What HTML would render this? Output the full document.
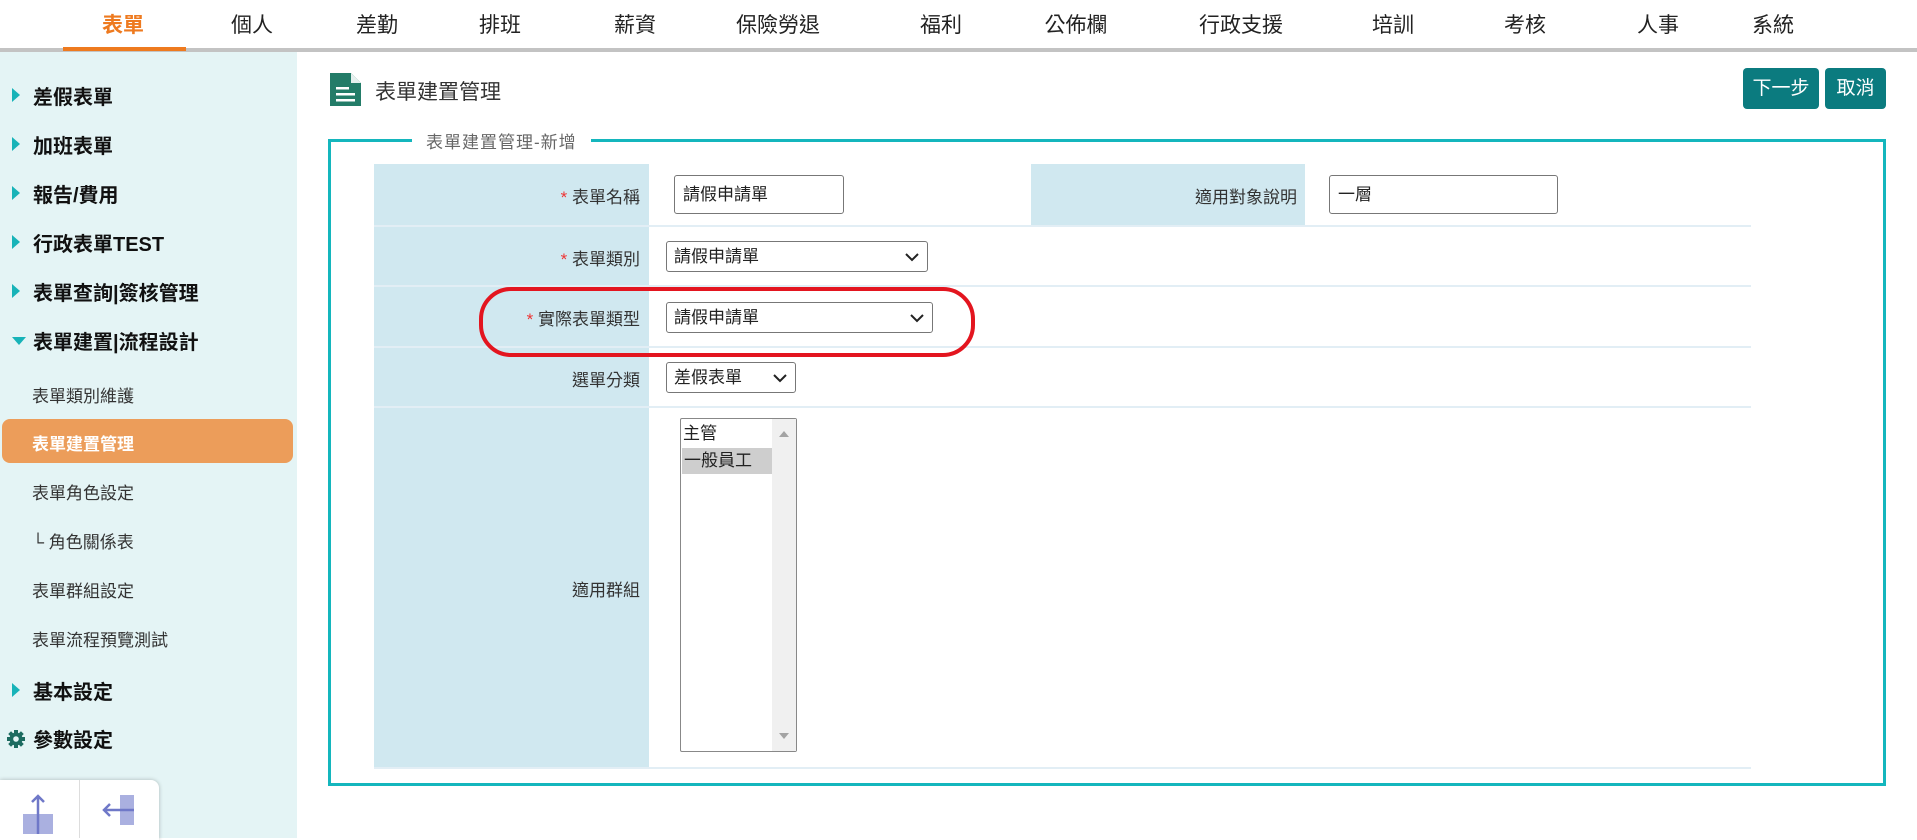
<!DOCTYPE html>
<html><head><meta charset="utf-8"><style>
*{margin:0;padding:0;box-sizing:border-box}
body{width:1917px;height:838px;position:relative;overflow:hidden;background:#fff;font-family:"Liberation Sans","Noto Sans CJK TC",sans-serif;color:#222}
.a{position:absolute;white-space:nowrap}
.nav{font-size:21px;color:#222;top:9px;transform:translateX(-50%)}
.side{font-size:20px;color:#111;left:33px;font-weight:bold}
.tri{position:absolute;left:12px;width:0;height:0;border-top:7px solid transparent;border-bottom:7px solid transparent;border-left:8px solid #17b3b8}
.sub{font-size:17px;color:#333;left:32px}
.lab{background:#d0e8f0;position:absolute}
.lt{font-size:17px;color:#333;position:absolute;text-align:right}
.sep{position:absolute;left:374px;width:1377px;height:2px;background:#e2eef5}
.inp{position:absolute;border:1px solid #777;border-radius:3px;background:#fff;font-size:17px;padding-left:8px;color:#222}
.sel{position:absolute;border:1px solid #777;border-radius:3px;background:#fff;font-size:17px;padding-left:7px;color:#222}
.sel svg{position:absolute;right:8px;top:50%;margin-top:-4px}
</style></head><body>
<div class="a nav" style="left:123px;color:#ee7a1f;font-weight:bold">表單</div>
<div class="a nav" style="left:252px">個人</div>
<div class="a nav" style="left:377px">差勤</div>
<div class="a nav" style="left:500px">排班</div>
<div class="a nav" style="left:635px">薪資</div>
<div class="a nav" style="left:778px">保險勞退</div>
<div class="a nav" style="left:941px">福利</div>
<div class="a nav" style="left:1076px">公佈欄</div>
<div class="a nav" style="left:1241px">行政支援</div>
<div class="a nav" style="left:1393px">培訓</div>
<div class="a nav" style="left:1525px">考核</div>
<div class="a nav" style="left:1658px">人事</div>
<div class="a nav" style="left:1773px">系統</div>
<div class="a" style="left:0;top:48px;width:1917px;height:4px;background:#c3c3c3"></div>
<div class="a" style="left:63px;top:47px;width:123px;height:4px;background:#ee7a1f"></div>
<div class="a" style="left:0;top:52px;width:297px;height:786px;background:#e4f4f5"></div>
<div class="tri" style="top:88px"></div><div class="a side" style="top:81px">差假表單</div>
<div class="tri" style="top:137px"></div><div class="a side" style="top:130px">加班表單</div>
<div class="tri" style="top:186px"></div><div class="a side" style="top:179px">報告/費用</div>
<div class="tri" style="top:235px"></div><div class="a side" style="top:228px">行政表單TEST</div>
<div class="tri" style="top:284px"></div><div class="a side" style="top:277px">表單查詢|簽核管理</div>
<div class="a" style="left:12px;top:337px;width:0;height:0;border-left:7px solid transparent;border-right:7px solid transparent;border-top:8px solid #17b3b8"></div>
<div class="a side" style="top:326px">表單建置|流程設計</div>
<div class="a sub" style="top:382px">表單類別維護</div>
<div class="a" style="left:2px;top:419px;width:291px;height:44px;background:#ec9d5a;border-radius:8px"></div>
<div class="a sub" style="top:430px;color:#fff;font-weight:bold">表單建置管理</div>
<div class="a sub" style="top:479px">表單角色設定</div>
<div class="a sub" style="top:528px">└ 角色關係表</div>
<div class="a sub" style="top:577px">表單群組設定</div>
<div class="a sub" style="top:626px">表單流程預覽測試</div>
<div class="tri" style="top:683px"></div><div class="a side" style="top:676px">基本設定</div>
<svg class="a" style="left:6px;top:729px" width="20" height="20" viewBox="0 0 20 20"><g fill="#1c6b60"><circle cx="10" cy="10" r="6.5"/><rect x="8" y="1" width="4" height="18"/><rect x="1" y="8" width="18" height="4"/><rect x="8" y="1" width="4" height="18" transform="rotate(45 10 10)"/><rect x="8" y="1" width="4" height="18" transform="rotate(-45 10 10)"/></g><circle cx="10" cy="10" r="2.8" fill="#e4f4f5"/></svg>
<div class="a side" style="top:724px;left:33px">參數設定</div>
<div class="a" style="left:0;top:780px;width:159px;height:60px;background:#fff;border-radius:0 8px 0 0;box-shadow:0 0 4px rgba(0,0,0,.25)"></div>
<div class="a" style="left:79px;top:780px;width:1px;height:58px;background:#ddd"></div>
<svg class="a" style="left:20px;top:792px" width="40" height="46"><rect x="3" y="22" width="30" height="20" fill="#aab0e0"/><path d="M18 42V4M12 10l6-6 6 6" stroke="#6f78c8" stroke-width="2.5" fill="none"/></svg>
<svg class="a" style="left:100px;top:792px" width="40" height="40"><rect x="20" y="3" width="14" height="30" fill="#aab0e0"/><path d="M34 18H4M10 12l-6 6 6 6" stroke="#6f78c8" stroke-width="2.5" fill="none"/></svg>
<svg class="a" style="left:330px;top:73px" width="32" height="33" viewBox="0 0 32 33"><path d="M0 0H21L31 10V33H0Z" fill="#237c68"/><path d="M21 0V10H31" fill="#e6f0ee"/><rect x="6" y="14" width="13" height="2.5" fill="#fff"/><rect x="6" y="20" width="19" height="2.5" fill="#fff"/><rect x="6" y="26" width="19" height="2.5" fill="#fff"/></svg>
<div class="a" style="left:375px;top:76px;font-size:21px;color:#333">表單建置管理</div>
<div class="a" style="left:1743px;top:68px;width:76px;height:41px;background:#0b7b7f;border-radius:4px;color:#fff;font-size:19px;text-align:center;line-height:41px">下一步</div>
<div class="a" style="left:1825px;top:68px;width:61px;height:41px;background:#0b7b7f;border-radius:4px;color:#fff;font-size:19px;text-align:center;line-height:41px">取消</div>
<div class="a" style="left:328px;top:139px;width:1558px;height:647px;border:3px solid #14b6bd"></div>
<div class="a" style="left:412px;top:128px;background:#fff;padding:0 14px;font-size:17px;color:#666;letter-spacing:1px">表單建置管理-新增</div>
<div class="lab" style="left:374px;top:164px;width:275px;height:61px"></div>
<div class="lab" style="left:1031px;top:164px;width:274px;height:61px"></div>
<div class="lab" style="left:374px;top:227px;width:275px;height:58px"></div>
<div class="lab" style="left:374px;top:287px;width:275px;height:59px"></div>
<div class="lab" style="left:374px;top:348px;width:275px;height:58px"></div>
<div class="lab" style="left:374px;top:408px;width:275px;height:359px"></div>
<div class="sep" style="top:225px"></div><div class="sep" style="top:285px"></div><div class="sep" style="top:346px"></div><div class="sep" style="top:406px"></div><div class="sep" style="top:767px"></div>
<div class="lt" style="right:1277px;top:183px"><span style="color:#e33">* </span>表單名稱</div>
<div class="lt" style="right:620px;top:183px">適用對象說明</div>
<div class="lt" style="right:1277px;top:245px"><span style="color:#e33">* </span>表單類別</div>
<div class="lt" style="right:1277px;top:305px"><span style="color:#e33">* </span>實際表單類型</div>
<div class="lt" style="right:1277px;top:366px">選單分類</div>
<div class="lt" style="right:1277px;top:576px">適用群組</div>
<div class="inp" style="left:674px;top:175px;width:170px;height:39px;line-height:37px">請假申請單</div>
<div class="inp" style="left:1329px;top:175px;width:229px;height:39px;line-height:37px">一層</div>
<div class="sel" style="left:666px;top:241px;width:262px;height:31px;line-height:29px">請假申請單<svg width="14" height="9"><path d="M1 1l6 6 6-6" stroke="#222" stroke-width="2" fill="none"/></svg></div>
<div class="sel" style="left:666px;top:302px;width:267px;height:31px;line-height:29px">請假申請單<svg width="14" height="9"><path d="M1 1l6 6 6-6" stroke="#222" stroke-width="2" fill="none"/></svg></div>
<div class="sel" style="left:666px;top:362px;width:130px;height:31px;line-height:29px">差假表單<svg width="14" height="9"><path d="M1 1l6 6 6-6" stroke="#222" stroke-width="2" fill="none"/></svg></div>
<div class="a" style="left:680px;top:418px;width:117px;height:334px;border:1px solid #888;border-radius:2px;background:#fff">
 <div style="position:absolute;right:0;top:0;width:24px;height:332px;background:#f0f0f0"></div>
 <div style="position:absolute;right:7px;top:12px;border-left:5px solid transparent;border-right:5px solid transparent;border-bottom:6px solid #a3a3a3"></div>
 <div style="position:absolute;right:7px;bottom:12px;border-left:5px solid transparent;border-right:5px solid transparent;border-top:6px solid #a3a3a3"></div>
 <div style="position:absolute;left:2px;top:3px;font-size:17px;line-height:24px">主管</div>
 <div style="position:absolute;left:1px;top:29px;width:90px;height:26px;background:#cecece;font-size:17px;line-height:26px;padding-left:2px">一般員工</div>
</div>
<svg class="a" style="left:478px;top:286px" width="498" height="72"><rect x="3" y="3" width="492" height="66" rx="30" ry="30" fill="none" stroke="#e3151f" stroke-width="4"/></svg>
</body></html>
